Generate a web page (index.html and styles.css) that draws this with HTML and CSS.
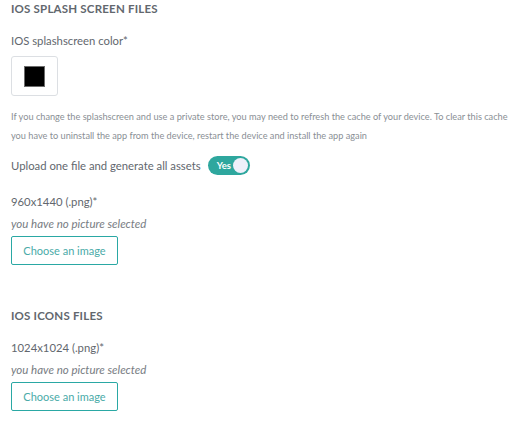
FILE: index.html
```html
<!DOCTYPE html>
<html lang="en">
<head>
  <meta charset="UTF-8">
  <title>iOS assets</title>
  <link rel="stylesheet" href="styles.css">
</head>
<body>
  <section class="group">
    <h3 class="group-title">IOS SPLASH SCREEN FILES</h3>
    <label class="field-label">IOS splashscreen color*</label>
    <div class="color-box"><span class="swatch"></span></div>
    <p class="help">If you change the splashscreen and use a private store, you may need to refresh the cache of your device. To clear this cache you have to uninstall the app from the device, restart the device and install the app again</p>
    <div class="toggle-row">
      <span class="field-label">Upload one file and generate all assets</span>
      <span class="toggle"><span class="toggle-text">Yes</span><span class="knob"></span></span>
    </div>
    <label class="field-label">960x1440 (.png)*</label>
    <p class="empty">you have no picture selected</p>
    <button class="choose">Choose an image</button>
  </section>

  <section class="group second">
    <h3 class="group-title">IOS ICONS FILES</h3>
    <label class="field-label">1024x1024 (.png)*</label>
    <p class="empty">you have no picture selected</p>
    <button class="choose">Choose an image</button>
  </section>
</body>
</html>
```

FILE: styles.css
```css
body {
  margin: 0;
  padding: 0 11px;
  font-family: Lato, "Open Sans", sans-serif;
  color: #5c6168;
  background: #fff;
}

.group {
  display: flex;
  flex-direction: column;
  align-items: flex-start;
}

.group-title {
  margin: 2px 0 0;
  font-size: 11.5px;
  font-weight: 700;
  letter-spacing: 0.2px;
  line-height: 14px;
  color: #62676e;
}

.field-label {
  display: block;
  font-size: 11.3px;
  line-height: 16px;
  color: #62676e;
}

.group > .field-label {
  margin-top: 17px;
}

.color-box {
  margin-top: 7px;
  width: 45px;
  height: 38px;
  border: 1px solid #dcdfe3;
  border-radius: 3px;
  display: flex;
  align-items: center;
  justify-content: center;
}

.swatch {
  width: 19px;
  height: 19px;
  background: #000;
  border: 1px solid #6c6c6c;
}

.help {
  margin: 11px 0 0;
  font-size: 9.2px;
  line-height: 19px;
  color: #8a8f95;
}

.toggle-row {
  margin-top: 11px;
  display: flex;
  align-items: center;
  gap: 7px;
}

.toggle {
  width: 42px;
  height: 19px;
  border-radius: 10px;
  background: #2ea79e;
  display: flex;
  align-items: center;
  justify-content: space-between;
  padding: 0 2px 0 9px;
  box-sizing: border-box;
}

.toggle-text {
  color: #fff;
  font-size: 9.5px;
  font-weight: 700;
}

.knob {
  width: 15px;
  height: 15px;
  border-radius: 50%;
  background: #eef0fa;
}

.group .toggle-row + .field-label {
  margin-top: 19px;
}

.empty {
  margin: 6px 0 0;
  font-size: 11.5px;
  font-style: italic;
  line-height: 15px;
  color: #777c82;
}

.choose {
  margin-top: 5px;
  width: 107px;
  height: 29px;
  padding: 0;
  background: #fff;
  border: 1px solid #2aa8a4;
  border-radius: 2px;
  font-family: inherit;
  font-size: 11px;
  color: #4aaba8;
  cursor: pointer;
}

.second {
  margin-top: 42px;
}
```
